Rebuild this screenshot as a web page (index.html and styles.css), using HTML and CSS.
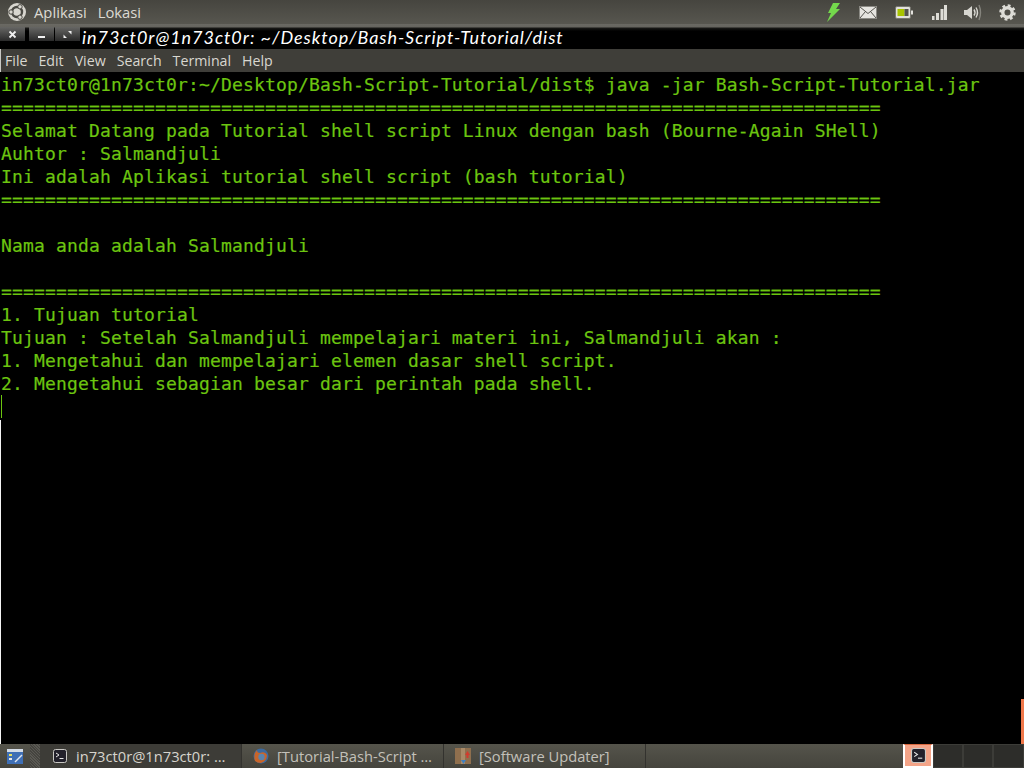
FILE: index.html
```html
<!DOCTYPE html>
<html lang="id">
<head>
<meta charset="utf-8">
<title>Terminal</title>
<link rel="stylesheet" href="styles.css">
</head>
<body>
<header class="top-panel">
  <div class="top-left">
    <svg class="logo" width="20" height="20" viewBox="0 0 20 20"><circle cx="10" cy="10" r="9" fill="#d8d6cf"/><circle cx="10" cy="10" r="5" fill="none" stroke="#4a4943" stroke-width="2.4"/><circle cx="4" cy="10" r="2.2" fill="#d8d6cf" stroke="#4a4943"/><circle cx="13" cy="4.8" r="2.2" fill="#d8d6cf" stroke="#4a4943"/><circle cx="13" cy="15.2" r="2.2" fill="#d8d6cf" stroke="#4a4943"/></svg>
    <span>Aplikasi</span><span>Lokasi</span>
  </div>
  <div class="tray">
    <svg width="16" height="19" viewBox="0 0 16 19"><path d="M7 0 L14 0 L10 6 L14 6 L1 19 L5 10 L2 10 Z" fill="#74d84c"/></svg>
    <svg width="18" height="13" viewBox="0 0 18 13"><rect x="0.5" y="0.5" width="17" height="12" fill="#e6e5e0" stroke="#8b8a84"/><path d="M1 1 L9 7.5 L17 1 M1 12 L6.5 5.5 M17 12 L11.5 5.5" fill="none" stroke="#55544e"/></svg>
    <svg width="19" height="13" viewBox="0 0 19 13"><rect x="1.5" y="0.5" width="15" height="12" rx="1.5" fill="#e2e1dc" stroke="#77766f"/><rect x="3.5" y="3" width="7" height="7" fill="#a9c400"/><rect x="10.5" y="3" width="4" height="7" fill="#55544e"/><rect x="17" y="4.5" width="2" height="4" fill="#e2e1dc"/></svg>
    <svg width="17" height="15" viewBox="0 0 17 15"><g fill="#dddcd6"><rect x="2" y="11" width="2.5" height="4"/><rect x="6" y="8" width="3" height="7"/><rect x="10.5" y="4" width="3" height="11"/><rect x="14" y="0" width="3" height="15"/></g></svg>
    <svg width="18" height="17" viewBox="0 0 18 17"><path d="M0 6 H3 L8 2 V15 L3 11 H0 Z" fill="#d8d7d1"/><path d="M10 5.5 Q12 8.5 10 11.5 M12 3.5 Q15 8.5 12 13.5" fill="none" stroke="#d8d7d1" stroke-width="1.4"/><path d="M15 1 Q18 8.5 15 16" fill="none" stroke="#85847d" stroke-width="1.4"/></svg>
    <svg class="gear" width="17" height="17" viewBox="0 0 18 18"><circle cx="9" cy="9" r="5" fill="none" stroke="#dddcd6" stroke-width="3.6"/><circle cx="9" cy="9" r="7.4" fill="none" stroke="#dddcd6" stroke-width="2.6" stroke-dasharray="3 2.81"/></svg>
  </div>
</header>
<div class="title-bar">
  <div class="win-buttons">
    <span class="win-btn"><svg width="9" height="9" viewBox="0 0 9 9"><path d="M1.5 1.5 L7.5 7.5 M7.5 1.5 L1.5 7.5" stroke="#f0f0f0" stroke-width="1.8"/></svg></span>
    <span class="win-btn min"><svg width="9" height="9" viewBox="0 0 9 9"><rect x="1" y="6" width="7" height="2" fill="#f0f0f0"/></svg></span>
    <span class="win-btn"><svg width="9" height="9" viewBox="0 0 9 9"><path d="M5 1 H8.5 V4.5 Z M4 8 H0.5 V4.5 Z" fill="#f0f0f0"/></svg></span>
  </div>
  <span class="win-title">in73ct0r@1n73ct0r: ~/Desktop/Bash-Script-Tutorial/dist</span>
</div>
<nav class="menu-bar">
  <span>File</span><span>Edit</span><span>View</span><span>Search</span><span>Terminal</span><span>Help</span>
</nav>
<main class="terminal">
<pre class="output">in73ct0r@1n73ct0r:~/Desktop/Bash-Script-Tutorial/dist$ java -jar Bash-Script-Tutorial.jar
================================================================================
Selamat Datang pada Tutorial shell script Linux dengan bash (Bourne-Again SHell)
Auhtor : Salmandjuli
Ini adalah Aplikasi tutorial shell script (bash tutorial)
================================================================================

Nama anda adalah Salmandjuli

================================================================================
1. Tujuan tutorial
Tujuan : Setelah Salmandjuli mempelajari materi ini, Salmandjuli akan :
1. Mengetahui dan mempelajari elemen dasar shell script.
2. Mengetahui sebagian besar dari perintah pada shell.
<span class="cursor"></span></pre>
  <div class="edge-line"></div>
  <div class="scroll-mark"></div>
</main>
<footer class="bottom-panel">
  <span class="desktop-btn"><svg width="16" height="15" viewBox="0 0 16 15"><rect width="16" height="15" fill="#3f6fb5"/><rect width="16" height="3" fill="#d5dde8"/><rect x="2" y="5" width="3" height="2" fill="#e8e060"/><rect x="2" y="9" width="3" height="2" fill="#e8e8e8"/><path d="M8 13 L15 6" stroke="#dfe6f0" stroke-width="1.5"/></svg></span>
  <span class="grip"></span>
  <div class="task term-task">
    <svg class="term-icon" width="14" height="14" viewBox="0 0 14 14"><rect x="0.5" y="0.5" width="13" height="13" rx="2" fill="#23212b" stroke="#c9c8c4"/><path d="M3 4 L6 6 L3 8" fill="none" stroke="#e6e6e6"/><rect x="6.5" y="9" width="4" height="1" fill="#e6e6e6"/></svg>
    <span>in73ct0r@1n73ct0r: …</span>
  </div>
  <div class="task fox-task">
    <svg width="16" height="16" viewBox="0 0 16 16"><circle cx="8" cy="8" r="7.5" fill="#3d6a9e"/><path d="M2 13 Q0 6 4 2 Q4 5 7 5 Q12 3 14 7 Q14 13 8 15 Q4 15 2 13 Z" fill="#c9652a"/><circle cx="8.5" cy="9" r="3.2" fill="#5b83ad"/></svg>
    <span>[Tutorial-Bash-Script …</span>
  </div>
  <div class="task updater-task">
    <svg width="16" height="16" viewBox="0 0 16 16"><rect width="16" height="16" fill="#8f6f4e"/><rect x="6" width="4" height="16" fill="#a98a68"/><path d="M10 7 L12.5 3 L15 7 Z" fill="#d23b2e"/><rect x="11.5" y="7" width="2" height="3" fill="#d23b2e"/><path d="M6 12 L8.5 16 L11 12 Z" fill="#3f7fc0"/></svg>
    <span>[Software Updater]</span>
  </div>
  <div class="spacer"></div>
  <div class="workspaces">
    <div class="ws active"><svg width="15" height="15" viewBox="0 0 14 14"><rect x="0.5" y="0.5" width="13" height="13" rx="2" fill="#23212b" stroke="#c9c8c4"/><path d="M3 4 L6 6 L3 8" fill="none" stroke="#e6e6e6"/><rect x="6.5" y="9" width="4" height="1" fill="#e6e6e6"/></svg></div>
    <div class="ws"></div><div class="ws"></div><div class="ws"></div>
  </div>
</footer>
</body>
</html>
```
FILE: styles.css
```css
* { box-sizing: border-box; }
html, body { margin: 0; height: 768px; overflow: hidden; }
body { width: 1024px; display: flex; flex-direction: column; background: #000; font-family: "Open Sans", "Noto Sans", sans-serif; }
.top-panel { height: 24px; flex: none; display: flex; justify-content: space-between; align-items: center; background: linear-gradient(#46453f, #57564f); color: #dcdad3; font-size: 14.8px; padding: 0 7px; }
.top-left { display: flex; align-items: center; gap: 11px; }
.top-left .logo { margin-right: -4px; }
.tray { display: flex; align-items: center; gap: 17px; padding-right: 1px; }
.title-bar { height: 25px; flex: none; display: flex; align-items: flex-start; color: #fff; background: linear-gradient(#6a6963 0, #66655f 3px, #1a1a18 4px, #000 7px, #000 100%); padding-top: 3px; }
.win-buttons { display: flex; align-items: center; }
.win-btn { width: 25px; height: 14px; display: flex; align-items: center; justify-content: center; margin-right: 1px; background: linear-gradient(#666664, #2a2a2a); }
.win-btn.min { margin-left: 3px; }
.win-title { margin-left: 1px; font-family: "Lato", sans-serif; font-style: italic; font-size: 18px; letter-spacing: .96px; line-height: 20px; white-space: nowrap; }
.menu-bar { height: 23px; flex: none; display: flex; align-items: center; gap: 11px; padding-left: 5px; background: #3f3e39; border-left: 1px solid #c8c8c4; color: #d9d7d0; font-size: 14.2px; }
.menu-bar span:first-child { margin-left: -1px; }
.terminal { flex: 1; position: relative; background: #000; }
.output { margin: 0; padding: 1px 0 0 1px; font-family: "DejaVu Sans Mono", monospace; font-size: 18px; letter-spacing: .16px; line-height: 23px; color: #6cc510; -webkit-text-stroke: .2px #6cc510; }
.cursor { display: inline-block; width: 1px; height: 23px; background: #6cc510; vertical-align: top; }
.edge-line { position: absolute; left: 0; top: 348px; bottom: 0; width: 1px; background: #f4f4f4; }
.scroll-mark { position: absolute; right: 0; bottom: 0; width: 3px; height: 45px; background: #f0784a; }
.bottom-panel { height: 24px; flex: none; display: flex; align-items: center; background: linear-gradient(#55544b, #45443d); color: #d6d4cd; font-size: 14.7px; white-space: nowrap; }
.desktop-btn { width: 30px; height: 24px; display: flex; align-items: center; justify-content: center; }
.grip { width: 10px; height: 24px; background: repeating-linear-gradient(45deg, #45443f 0 1px, #5a5953 1px 2px); }
.task { height: 24px; display: flex; align-items: center; gap: 8px; border-right: 1px solid #33322e; }
.term-task { width: 202px; padding-left: 13px; gap: 9px; background: #3d3c37; }
.fox-task { width: 202px; padding-left: 11px; color: #c3c1ba; }
.updater-task { width: 202px; padding-left: 11px; color: #c3c1ba; }
.spacer { flex: 1; }
.workspaces { display: flex; height: 24px; }
.ws { width: 30px; height: 24px; background: #2d2d2a; border: 1px solid #3c3c38; }
.ws.active { background: #f4a488; border: 2px solid #fff; border-top: 1px solid #d8693f; display: flex; align-items: center; justify-content: center; }
.ws:last-child { width: 31px; }
```
